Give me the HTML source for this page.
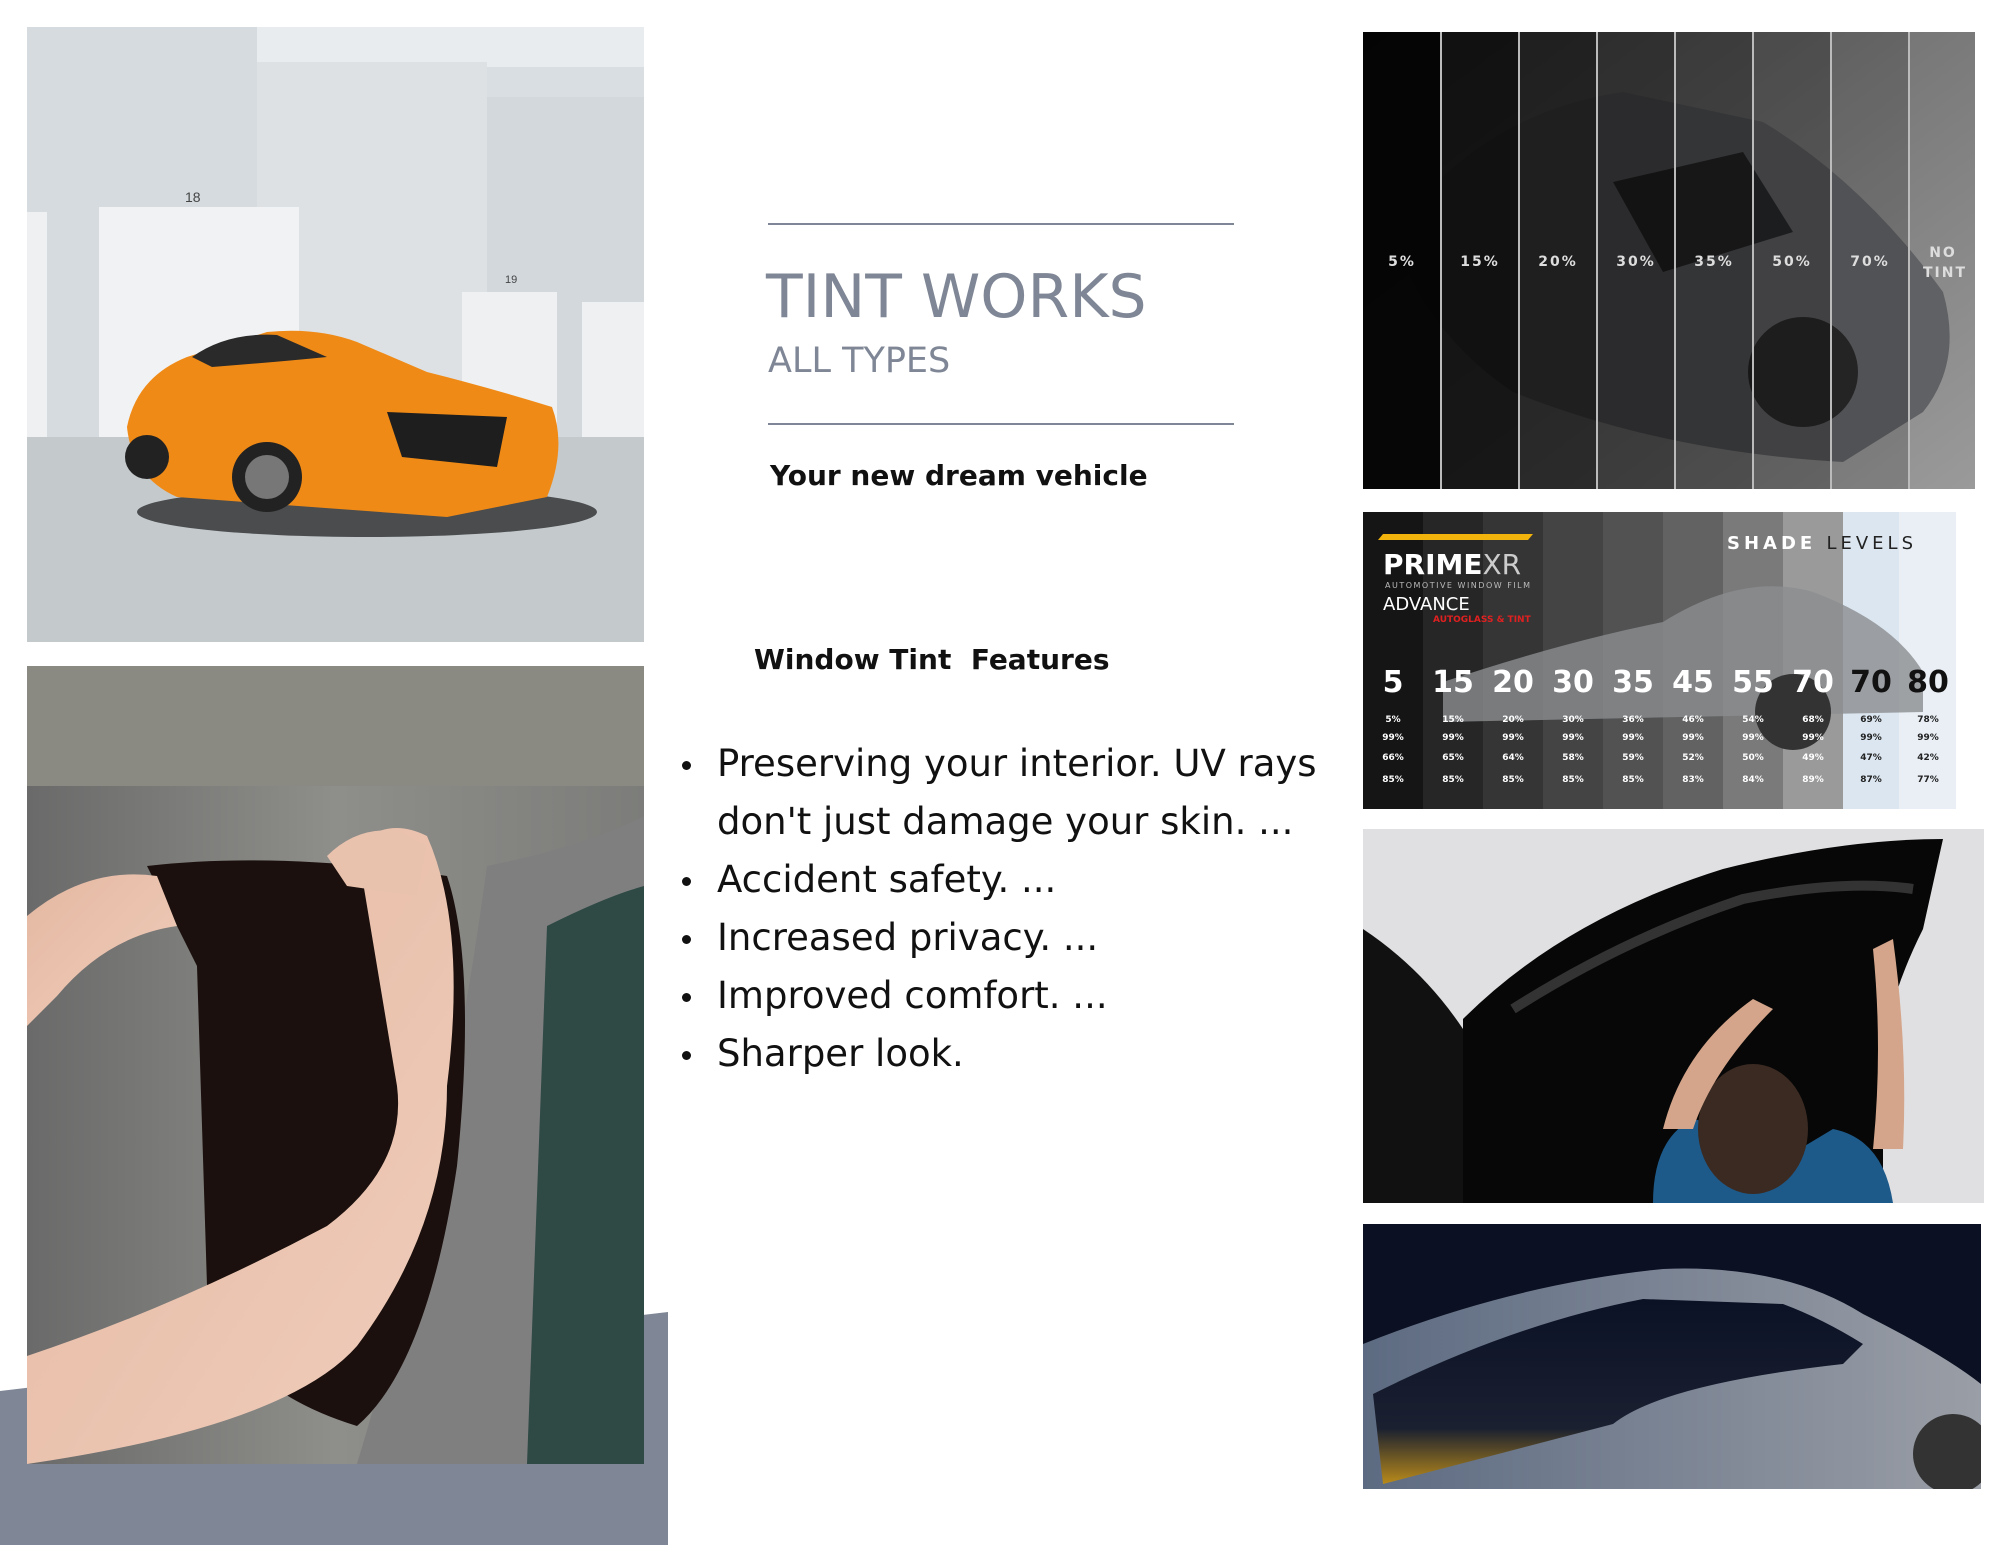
<!DOCTYPE html>
<html><head><meta charset="utf-8"><style>
*{margin:0;padding:0;box-sizing:border-box}
body{width:2000px;height:1545px;background:#fff;position:relative;overflow:hidden;font-family:"DejaVu Sans","Liberation Sans",sans-serif}
.abs{position:absolute}
.line{position:absolute;height:2px;background:#7f8796;left:768px;width:466px}
ul{position:absolute;left:682px;top:735px;list-style:none;font-size:37px;line-height:58px;color:#111}
ul li{position:relative;padding-left:35px}
ul li:before{content:"";position:absolute;left:0;top:26px;width:9px;height:9px;border-radius:50%;background:#111}
</style></head><body>
<svg class="abs" style="left:0;top:0" width="2000" height="1545">
<polygon points="0,1391 668,1312 668,1545 0,1545" fill="#7f8796"/>
</svg>
<svg class="abs" style="left:27px;top:27px" width="617" height="615" viewBox="0 0 617 615">
<rect width="617" height="615" fill="#d9dee2"/>
<rect width="617" height="40" fill="#e8ecef"/>
<rect x="0" y="0" width="230" height="420" fill="#d6dbdf"/>
<rect x="230" y="35" width="230" height="385" fill="#dde1e4"/>
<rect x="460" y="70" width="157" height="350" fill="#d3d8dc"/>
<rect x="72" y="180" width="200" height="230" fill="#f1f2f3"/>
<rect x="435" y="265" width="95" height="150" fill="#eef0f1"/>
<rect x="555" y="275" width="62" height="140" fill="#eef0f1"/>
<rect x="0" y="185" width="20" height="225" fill="#eef0f1"/>
<rect x="0" y="410" width="617" height="205" fill="#c4c9cc"/>
<ellipse cx="340" cy="485" rx="230" ry="25" fill="#4a4c4e"/>
<path d="M100,400 Q110,350 160,330 L240,305 Q290,300 330,315 L400,345 Q460,360 525,380 Q540,420 520,470 L420,490 L150,470 Q105,450 100,400Z" fill="#f08a16"/>
<path d="M165,330 Q200,305 250,308 L300,330 Q250,335 185,340Z" fill="#2a2a2a"/>
<path d="M360,385 L480,390 L470,440 L375,430Z" fill="#1e1e1e"/>
<circle cx="240" cy="450" r="35" fill="#222"/><circle cx="240" cy="450" r="22" fill="#777"/>
<circle cx="120" cy="430" r="22" fill="#222"/>
<text x="158" y="175" font-size="14" fill="#444" font-family="Liberation Sans">18</text>
<text x="478" y="256" font-size="11" fill="#444" font-family="Liberation Sans">19</text>
</svg>
<svg class="abs" style="left:27px;top:666px" width="617" height="798" viewBox="0 0 617 798">
<defs><linearGradient id="bg2" x1="0" y1="0" x2="1" y2="0"><stop offset="0" stop-color="#6a6a6a"/><stop offset="0.5" stop-color="#8e8e8a"/><stop offset="1" stop-color="#7c7d7a"/></linearGradient>
<linearGradient id="arm" x1="0" y1="0" x2="1" y2="1"><stop offset="0" stop-color="#e4b8a2"/><stop offset="1" stop-color="#f0cdbb"/></linearGradient></defs>
<rect width="617" height="798" fill="url(#bg2)"/>
<rect x="0" y="0" width="617" height="120" fill="#8b8a82"/>
<path d="M460,200 Q560,180 617,150 L617,798 L330,798 Q420,500 460,200Z" fill="#807f80"/>
<path d="M520,260 Q580,230 617,220 L617,798 L500,798Z" fill="#2f4a45"/>
<path d="M120,200 Q250,185 420,210 Q450,300 430,500 Q400,700 330,760 Q200,720 180,620 L170,300Z" fill="#1b100d"/>
<path d="M0,250 Q60,200 130,210 L150,260 Q80,270 30,330 L0,360Z" fill="url(#arm)"/>
<path d="M0,690 Q150,640 300,560 Q380,500 370,420 L330,180 Q360,150 400,170 Q440,260 420,420 Q420,560 330,680 Q260,760 0,798Z" fill="url(#arm)"/>
<path d="M300,190 Q330,160 370,165 L400,180 L390,230 L320,220Z" fill="#e9c2ae"/>
</svg>
<div class="line" style="top:223px"></div>
<div class="abs" style="left:766px;top:262px;font-size:60px;color:#7f8796">TINT WORKS</div>
<div class="abs" style="left:768px;top:341px;font-size:35px;color:#7f8796">ALL TYPES</div>
<div class="line" style="top:423px"></div>
<div class="abs" style="left:770px;top:459px;font-size:28px;font-weight:bold;color:#111">Your new dream vehicle</div>
<div class="abs" style="left:754px;top:643px;font-size:28px;font-weight:bold;color:#111;white-space:pre">Window Tint  Features</div>
<ul>
<li>Preserving your interior. UV rays<br>don't just damage your skin. ...</li>
<li>Accident safety. ...</li>
<li>Increased privacy. ...</li>
<li>Improved comfort. ...</li>
<li>Sharper look.</li>
</ul>
<svg class="abs" style="left:1363px;top:32px" width="612" height="457" viewBox="0 0 612 457">
<defs><linearGradient id="road" x1="0" y1="0" x2="1" y2="1"><stop offset="0" stop-color="#5a5a5a"/><stop offset="1" stop-color="#9a9a9a"/></linearGradient></defs>
<rect width="612" height="457" fill="url(#road)"/>
<path d="M30,200 Q120,80 260,60 L400,90 Q500,150 580,260 Q600,330 560,380 L480,430 Q300,420 150,360 Q60,300 30,200Z" fill="#606164"/>
<path d="M250,150 L380,120 L430,200 L300,240Z" fill="#2a2b2d"/>
<circle cx="440" cy="340" r="55" fill="#2b2b2b"/>
<rect x="0" width="78" height="457" fill="#000" opacity="0.95"/>
<rect x="78" width="78" height="457" fill="#000" opacity="0.82"/>
<rect x="156" width="78" height="457" fill="#000" opacity="0.68"/>
<rect x="234" width="78" height="457" fill="#000" opacity="0.55"/>
<rect x="312" width="78" height="457" fill="#000" opacity="0.45"/>
<rect x="390" width="78" height="457" fill="#000" opacity="0.32"/>
<rect x="468" width="78" height="457" fill="#000" opacity="0.15"/>
<g stroke="#bbb" stroke-width="2"><line x1="78" y1="0" x2="78" y2="457"/><line x1="156" y1="0" x2="156" y2="457"/><line x1="234" y1="0" x2="234" y2="457"/><line x1="312" y1="0" x2="312" y2="457"/><line x1="390" y1="0" x2="390" y2="457"/><line x1="468" y1="0" x2="468" y2="457"/><line x1="546" y1="0" x2="546" y2="457"/></g>
<g fill="#ddd" font-size="14" font-weight="bold" font-family="DejaVu Sans" text-anchor="middle" letter-spacing="2">
<text x="39" y="234">5%</text><text x="117" y="234">15%</text><text x="195" y="234">20%</text><text x="273" y="234">30%</text><text x="351" y="234">35%</text><text x="429" y="234">50%</text><text x="507" y="234">70%</text><text x="580" y="225">NO</text><text x="582" y="245">TINT</text></g>
</svg>
<svg class="abs" style="left:1363px;top:512px" width="593" height="297" viewBox="0 0 593 297">
<rect x="0" width="60" height="297" fill="#151515"/><rect x="60" width="60" height="297" fill="#262626"/>
<rect x="120" width="60" height="297" fill="#353535"/><rect x="180" width="60" height="297" fill="#444"/>
<rect x="240" width="60" height="297" fill="#525252"/><rect x="300" width="60" height="297" fill="#626262"/>
<rect x="360" width="60" height="297" fill="#7a7a7a"/><rect x="420" width="60" height="297" fill="#9a9a9a"/>
<rect x="480" width="56" height="297" fill="#dbe6f0"/><rect x="536" width="57" height="297" fill="#e9eff5"/>
<path d="M80,170 Q200,130 300,110 Q380,60 450,80 Q530,110 560,160 L560,200 L80,210Z" fill="#8b8d90" opacity="0.8"/>
<circle cx="430" cy="200" r="38" fill="#333"/>
<path d="M20,22 L170,22 L165,28 L15,28Z" fill="#f2b40c"/>
<text x="20" y="62" font-size="28" font-weight="bold" fill="#fff" font-family="DejaVu Sans">PRIME<tspan font-weight="normal" fill="#ccc">XR</tspan></text>
<text x="22" y="76" font-size="8" fill="#bbb" letter-spacing="1.5">AUTOMOTIVE WINDOW FILM</text>
<text x="20" y="98" font-size="18" fill="#fff">ADVANCE</text>
<text x="70" y="110" font-size="9" font-weight="bold" fill="#e02020">AUTOGLASS &amp; TINT</text>
<text x="364" y="37" font-size="18" font-weight="bold" fill="#fff" letter-spacing="4">SHADE <tspan font-weight="normal" fill="#222">LEVELS</tspan></text>
<g font-size="30" font-weight="bold" fill="#fff" text-anchor="middle"><text x="30" y="180">5</text><text x="90" y="180">15</text><text x="150" y="180">20</text><text x="210" y="180">30</text><text x="270" y="180">35</text><text x="330" y="180">45</text><text x="390" y="180">55</text><text x="450" y="180">70</text><text x="508" y="180" fill="#111">70</text><text x="565" y="180" fill="#111">80</text></g>
<g font-size="9" font-weight="bold" fill="#fff" text-anchor="middle">
<text x="30" y="210">5%</text><text x="90" y="210">15%</text><text x="150" y="210">20%</text><text x="210" y="210">30%</text><text x="270" y="210">36%</text><text x="330" y="210">46%</text><text x="390" y="210">54%</text><text x="450" y="210">68%</text><text x="508" y="210" fill="#222">69%</text><text x="565" y="210" fill="#222">78%</text>
<text x="30" y="228">99%</text><text x="90" y="228">99%</text><text x="150" y="228">99%</text><text x="210" y="228">99%</text><text x="270" y="228">99%</text><text x="330" y="228">99%</text><text x="390" y="228">99%</text><text x="450" y="228">99%</text><text x="508" y="228" fill="#222">99%</text><text x="565" y="228" fill="#222">99%</text>
<text x="30" y="248">66%</text><text x="90" y="248">65%</text><text x="150" y="248">64%</text><text x="210" y="248">58%</text><text x="270" y="248">59%</text><text x="330" y="248">52%</text><text x="390" y="248">50%</text><text x="450" y="248">49%</text><text x="508" y="248" fill="#222">47%</text><text x="565" y="248" fill="#222">42%</text>
<text x="30" y="270">85%</text><text x="90" y="270">85%</text><text x="150" y="270">85%</text><text x="210" y="270">85%</text><text x="270" y="270">85%</text><text x="330" y="270">83%</text><text x="390" y="270">84%</text><text x="450" y="270">89%</text><text x="508" y="270" fill="#222">87%</text><text x="565" y="270" fill="#222">77%</text></g>
</svg>
<svg class="abs" style="left:1363px;top:829px" width="621" height="374" viewBox="0 0 621 374">
<rect width="621" height="374" fill="#e0e0e2"/>
<path d="M0,100 Q60,140 100,200 L100,374 L0,374Z" fill="#111"/>
<path d="M100,190 Q200,90 360,40 Q480,10 580,10 L560,100 Q520,180 520,240 L520,374 L100,374Z" fill="#070707"/>
<path d="M150,180 Q260,110 380,70 Q480,50 550,60" stroke="#333" stroke-width="10" fill="none"/>
<path d="M290,374 Q290,310 330,290 Q380,300 420,330 L470,300 Q520,310 530,374Z" fill="#1d5a8a"/>
<ellipse cx="390" cy="300" rx="55" ry="65" fill="#3a2a22"/>
<path d="M300,300 Q320,220 390,170 L410,180 Q350,240 330,300Z" fill="#d4a58a"/>
<path d="M510,320 Q520,220 510,120 L530,110 Q545,220 540,320Z" fill="#d4a58a"/>
</svg>
<svg class="abs" style="left:1363px;top:1224px" width="618" height="265" viewBox="0 0 618 265">
<defs><linearGradient id="win" x1="0" y1="0" x2="0" y2="1"><stop offset="0" stop-color="#0c1226"/><stop offset="0.7" stop-color="#1a2030"/><stop offset="1" stop-color="#b98a1a"/></linearGradient>
<linearGradient id="body" x1="0" y1="0" x2="1" y2="0"><stop offset="0" stop-color="#5d6b82"/><stop offset="1" stop-color="#9a9ea6"/></linearGradient></defs>
<rect width="618" height="265" fill="#0b1022"/>
<path d="M0,120 Q150,60 300,45 Q420,40 500,90 Q580,130 618,160 L618,265 L0,265Z" fill="url(#body)"/>
<path d="M10,170 Q150,100 280,75 L420,80 Q460,95 500,120 L480,140 Q300,160 250,200 L20,260Z" fill="url(#win)"/>
<circle cx="590" cy="230" r="40" fill="#333"/>
</svg>
</body></html>
